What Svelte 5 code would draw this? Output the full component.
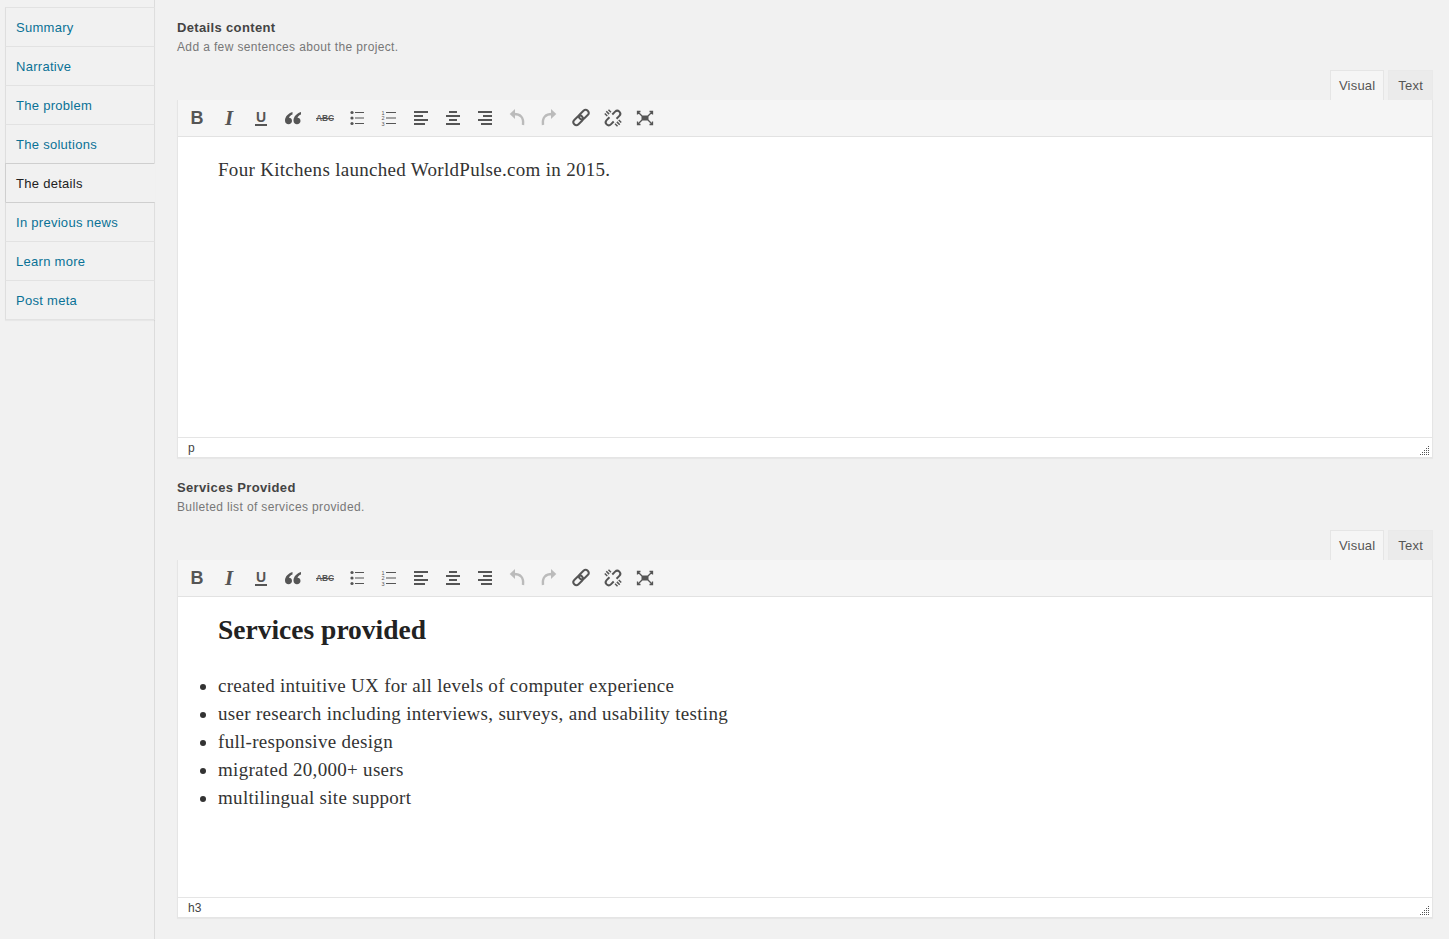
<script>
  const tabs = ['Summary', 'Narrative', 'The problem', 'The solutions', 'The details', 'In previous news', 'Learn more', 'Post meta'];
  const active = 'The details';
  const dots = [[9,1],[7,3],[9,3],[5,5],[7,5],[9,5],[3,7],[5,7],[7,7],[9,7],[1,9],[3,9],[5,9],[7,9],[9,9]];
</script>

{#snippet toolbar()}
  <div class="toolbar">
    <span class="btn"><span class="glyph bold">B</span></span>
    <span class="btn"><span class="glyph italic">I</span></span>
    <span class="btn"><span class="glyph under">U</span></span>
    <span class="btn">
      <svg viewBox="0 0 20 20"><path d="M9.500 4C5.500 5.200 2 8.500 2 12.500 2 15 3.600 16.200 5.500 16.200S9 15 9 13s-1.300-3.200-3-3.200c.4-1.400 1.700-2.600 3.500-3.300zM18 4c-4 1.200-7.500 4.500-7.500 8.500 0 2.500 1.600 3.700 3.500 3.700s3.500-1.200 3.500-3.200-1.300-3.200-3-3.200c.4-1.400 1.700-2.600 3.500-3.300z"/></svg>
    </span>
    <span class="btn"><span class="glyph strike">ABC</span></span>
    <span class="btn">
      <svg viewBox="0 0 20 20"><circle cx="5" cy="4.500" r="1.600"/><circle cx="5" cy="10" r="1.600"/><circle cx="5" cy="15.500" r="1.600"/><path d="M8 4h9v1H8zM8 9.500h9v1H8zM8 15h9v1H8z"/></svg>
    </span>
    <span class="btn">
      <svg viewBox="0 0 20 20"><text x="2.500" y="6.500" class="num">1</text><text x="2.500" y="12" class="num">2</text><text x="2.500" y="17.500" class="num">3</text><path d="M7 4h10v1H7zM7 9.500h10v1H7zM7 15h10v1H7z"/></svg>
    </span>
    <span class="btn">
      <svg viewBox="0 0 20 20"><path d="M3 3h14v2H3zM3 7h9v2H3zM3 11h14v2H3zM3 15h11v2H3z"/></svg>
    </span>
    <span class="btn">
      <svg viewBox="0 0 20 20"><path d="M6 3h8v2H6zM3 7h14v2H3zM6 11h8v2H6zM3 15h14v2H3z"/></svg>
    </span>
    <span class="btn">
      <svg viewBox="0 0 20 20"><path d="M3 3h14v2H3zM8 7h9v2H8zM3 11h14v2H3zM6 15h11v2H6z"/></svg>
    </span>
    <span class="btn off">
      <svg viewBox="0 0 20 20"><path d="M2.700 6 8 1v10z"/><path class="tail" d="M7 6c6 0 10 3 9 11"/></svg>
    </span>
    <span class="btn off">
      <svg viewBox="0 0 20 20"><path d="M17.300 6 12 1v10z"/><path class="tail" d="M13 6C7 6 3 9 4 17"/></svg>
    </span>
    <span class="btn">
      <svg viewBox="0 0 20 20" class="line"><g transform="rotate(-45 10 9.500)"><rect x="0.500" y="6.500" width="11" height="6" rx="3"/><rect x="8.500" y="6.500" width="11" height="6" rx="3"/></g></svg>
    </span>
    <span class="btn">
      <svg viewBox="0 0 20 20" class="line"><g transform="rotate(-45 10 10)"><path d="M8 7H4a3 3 0 0 0 0 6h4M12 7h4a3 3 0 0 1 0 6h-4"/><path class="thin" d="M10 .5v4M7.400 1v3.500M12.600 1v3.500M10 19.500v-4M7.400 19v-3.500M12.600 19v-3.500"/></g></svg>
    </span>
    <span class="btn">
      <svg viewBox="0 0 20 20"><path d="M6.500 7.500h7v5h-7z"/><path class="diag" d="M3 4l4 4M17 4l-4 4M3 16l4-4M17 16l-4-4M2.500 6.500v-3h3M17.500 6.500v-3h-3M2.500 13.500v3h3M17.500 13.500v3h-3"/></svg>
    </span>
  </div>
{/snippet}

{#snippet field(label, desc, path)}
  <section class="field">
    <div class="label">{label}</div>
    <div class="desc">{desc}</div>
    <div class="tabs">
      <span class="tab on">Visual</span>
      <span class="tab">Text</span>
    </div>
    <div class="editor">
      {@render toolbar()}
      <div class="content">
        {#if path === 'p'}
          <p>Four Kitchens launched WorldPulse.com in 2015.</p>
        {:else}
          <h3>Services provided</h3>
          <ul>
            <li>created intuitive UX for all levels of computer experience</li>
            <li>user research including interviews, surveys, and usability testing</li>
            <li>full-responsive design</li>
            <li>migrated 20,000+ users</li>
            <li>multilingual site support</li>
          </ul>
        {/if}
      </div>
      <div class="status">
        {path}
        <svg class="grip" viewBox="0 0 10 10" width="10" height="10">
          {#each dots as [x, y]}
            <rect x={x - 1} y={y - 1} width="1" height="1" fill="#555" />
          {/each}
        </svg>
      </div>
    </div>
  </section>
{/snippet}

<div class="page">
  <nav class="side">
    <ul class="menu">
      {#each tabs as t}
        <li class:current={t === active}>{t}</li>
      {/each}
    </ul>
  </nav>
  <main class="main">
    {@render field('Details content', 'Add a few sentences about the project.', 'p')}
    {@render field('Services Provided', 'Bulleted list of services provided.', 'h3')}
  </main>
</div>

<style>
  :global(body) {
    background: #f1f1f1;
    font-family: "Liberation Sans", Arial, sans-serif;
    color: #444;
  }

  .page {
    display: flex;
    height: 939px;
    overflow: hidden;
  }

  .side {
    width: 155px;
    flex: none;
    box-sizing: border-box;
    border-right: 1px solid #dcdcdc;
    padding: 7px 0 0 5px;
  }

  .menu {
    list-style: none;
    margin: 0 -1px 0 0;
    padding: 0;
    box-shadow: 0 1px 1px rgba(0, 0, 0, 0.04);
  }

  .menu li {
    box-sizing: border-box;
    height: 39px;
    line-height: 39px;
    padding-left: 10px;
    font-size: 13px;
    letter-spacing: 0.28px;
    color: #0a7196;
    border: 1px solid #dedede;
    border-top-color: #e2e2e2;
    border-bottom: 0;
  }

  .menu li:last-child {
    height: 40px;
    border-bottom: 1px solid #e2e2e2;
  }

  .menu li.current {
    color: #222;
    border-top-color: #cfcfcf;
    border-left-color: #cfcfcf;
    border-right-color: #f1f1f1;
  }

  .menu li.current + li {
    border-top-color: #cfcfcf;
  }

  .main {
    flex: 1;
    padding: 19px 16px 0 22px;
    min-width: 0;
  }

  .field {
    margin-bottom: 21px;
  }

  .label {
    font-size: 13px;
    font-weight: 700;
    line-height: 18px;
    letter-spacing: 0.35px;
    color: #444;
  }

  .desc {
    font-size: 12px;
    line-height: 20px;
    letter-spacing: 0.37px;
    color: #777;
  }

  .tabs {
    display: flex;
    justify-content: flex-end;
    gap: 4px;
    margin-top: 13px;
    height: 30px;
  }

  .tab {
    box-sizing: border-box;
    height: 30px;
    line-height: 29px;
    padding: 0 9px;
    font-size: 13px;
    letter-spacing: 0.2px;
    color: #555;
    background: #ebebeb;
    border: 1px solid #e9e9e9;
    border-bottom: 0;
  }

  .tab.on {
    padding: 0 8px;
    background: #f5f5f5;
    border-color: #e5e5e5;
  }

  .editor {
    border: 1px solid #e5e5e5;
    border-top: 0;
    background: #fff;
    box-shadow: 0 1px 1px rgba(0, 0, 0, 0.04);
  }

  .toolbar {
    display: flex;
    align-items: center;
    box-sizing: border-box;
    height: 37px;
    padding-left: 3px;
    background: #f5f5f5;
    border-bottom: 1px solid #e2e2e2;
  }

  .btn {
    width: 32px;
    height: 36px;
    display: flex;
    align-items: center;
    justify-content: center;
    color: #555;
  }

  .btn svg {
    width: 20px;
    height: 20px;
    fill: #555;
  }

  .btn.off svg {
    fill: #bbb;
  }

  .btn .tail {
    fill: none;
    stroke: #bbb;
    stroke-width: 2.400;
  }

  .btn .line {
    fill: none;
    stroke: #555;
    stroke-width: 2;
  }

  .line .thin {
    stroke-width: 1.500;
  }

  .btn .diag {
    fill: none;
    stroke: #555;
    stroke-width: 1.300;
  }

  .num {
    font-size: 5.500px;
    fill: #555;
    font-family: "Liberation Sans", sans-serif;
  }

  .glyph {
    display: block;
    line-height: 1;
    color: #555;
  }

  .bold {
    font-size: 18px;
    font-weight: 700;
  }

  .italic {
    font-family: "Liberation Serif", serif;
    font-size: 21px;
    font-weight: 700;
    font-style: italic;
  }

  .under {
    font-size: 14px;
    font-weight: 700;
    border-bottom: 2px solid #555;
    line-height: 13px;
    padding: 0 1px;
  }

  .strike {
    font-size: 8.500px;
    font-weight: 700;
    text-decoration: line-through;
    letter-spacing: -0.2px;
  }

  .content {
    box-sizing: border-box;
    height: 300px;
    padding: 19px 20px 0 40px;
    font-family: "Liberation Serif", "DejaVu Serif", serif;
    font-size: 19px;
    line-height: 28px;
    letter-spacing: 0.3px;
    color: #333;
  }

  .content p {
    margin: 0;
  }

  .content h3 {
    margin: 0 0 28px;
    font-size: 27.500px;
    line-height: 28px;
    letter-spacing: 0;
    color: #222;
  }

  .content ul {
    margin: 0;
    padding: 0;
  }

  .status {
    position: relative;
    box-sizing: border-box;
    height: 20px;
    line-height: 20px;
    padding-left: 10px;
    font-size: 12px;
    letter-spacing: 0.2px;
    color: #444;
    background: #fff;
    border-top: 1px solid #e5e5e5;
  }

  .grip {
    position: absolute;
    right: 2px;
    bottom: 1px;
  }
</style>
